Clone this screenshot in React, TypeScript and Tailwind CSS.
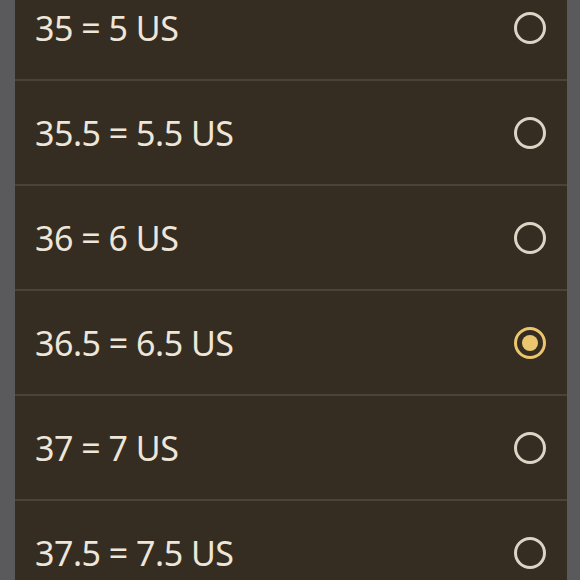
import React from "react";

const sizes = [
  { label: "35 = 5 US", selected: false },
  { label: "35.5 = 5.5 US", selected: false },
  { label: "36 = 6 US", selected: false },
  { label: "36.5 = 6.5 US", selected: true },
  { label: "37 = 7 US", selected: false },
  { label: "37.5 = 7.5 US", selected: false },
];

function Radio({ selected }: { selected: boolean }) {
  return (
    <svg width="34" height="34" viewBox="0 0 34 34">
      <circle
        cx="17"
        cy="17"
        r="14.5"
        fill="none"
        stroke={selected ? "#ecc66e" : "#ddd4c6"}
        strokeWidth="3"
      />
      {selected && <circle cx="17" cy="17" r="8" fill="#ecc66e" />}
    </svg>
  );
}

export default function App() {
  return (
    <div className="w-[580px] h-[580px] overflow-hidden bg-[#5a5a5c] flex">
      <div className="w-[552px] ml-[15px] bg-[#352d22] flex flex-col -mt-[24px] shrink-0">
        {sizes.map((s) => (
          <div
            key={s.label}
            className="h-[105px] shrink-0 border-b-2 border-[#4b4336] flex items-center justify-between pl-[20px] pr-[20px]"
          >
            <span
              className="text-[34px] font-normal tracking-[-0.5px] text-[#eee6d8] leading-none"
              style={{ fontFamily: '"Noto Sans", sans-serif' }}
            >
              {s.label}
            </span>
            <Radio selected={s.selected} />
          </div>
        ))}
      </div>
    </div>
  );
}
